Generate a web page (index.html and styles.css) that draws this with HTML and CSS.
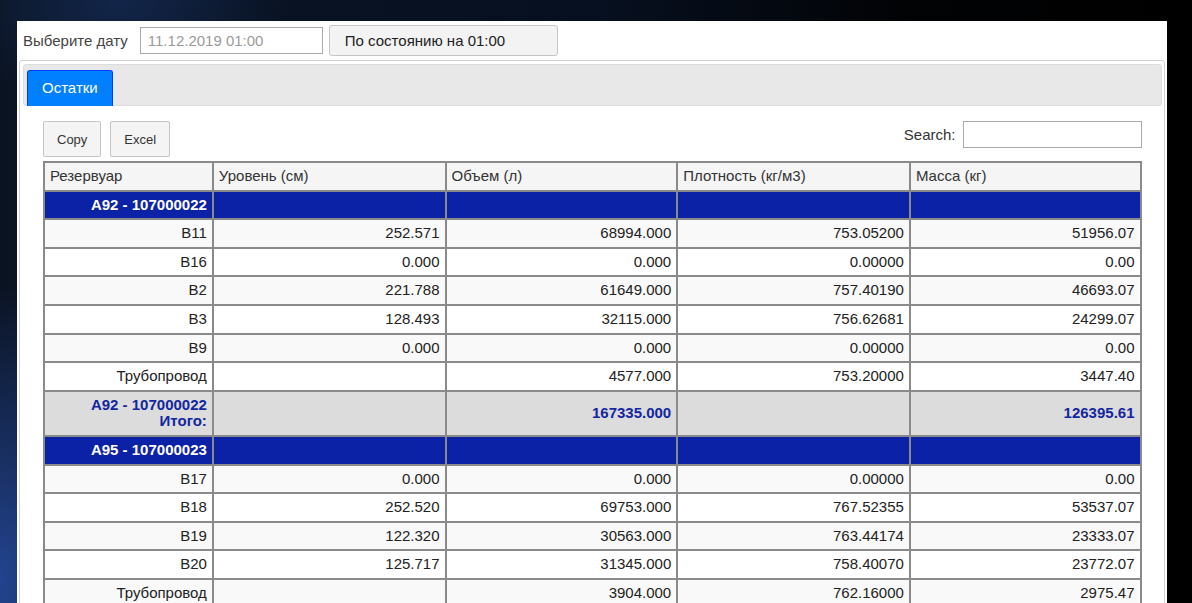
FILE: index.html
```html
<!DOCTYPE html>
<html lang="ru">
<head>
<meta charset="utf-8">
<title>Остатки</title>
<link rel="stylesheet" href="styles.css">
</head>
<body>
<div class="panel">
  <div class="toolbar">
    <span class="toolbar-label">Выберите дату</span>
    <input class="date-input" type="text" placeholder="11.12.2019 01:00">
    <button class="state-btn">По состоянию на 01:00</button>
  </div>
  <div class="tabs">
    <ul class="tabs-nav">
      <li class="tab active">Остатки</li>
    </ul>
    <div class="tab-panel">
      <div class="dt-controls">
        <div class="dt-buttons">
          <button class="dt-button">Copy</button>
          <button class="dt-button">Excel</button>
        </div>
        <label class="dt-search">Search: <input type="search" class="search-input"></label>
      </div>
      <table class="grid">
        <colgroup>
          <col class="c1"><col class="c2"><col class="c3"><col class="c2"><col class="c4">
        </colgroup>
        <thead>
          <tr><th>Резервуар</th><th>Уровень (см)</th><th>Объем (л)</th><th>Плотность (кг/м3)</th><th>Масса (кг)</th></tr>
        </thead>
        <tbody>
          <tr class="group"><td>A92 - 107000022</td><td></td><td></td><td></td><td></td></tr>
          <tr class="odd"><td>B11</td><td>252.571</td><td>68994.000</td><td>753.05200</td><td>51956.07</td></tr>
          <tr class="even"><td>B16</td><td>0.000</td><td>0.000</td><td>0.00000</td><td>0.00</td></tr>
          <tr class="odd"><td>B2</td><td>221.788</td><td>61649.000</td><td>757.40190</td><td>46693.07</td></tr>
          <tr class="even"><td>B3</td><td>128.493</td><td>32115.000</td><td>756.62681</td><td>24299.07</td></tr>
          <tr class="odd"><td>B9</td><td>0.000</td><td>0.000</td><td>0.00000</td><td>0.00</td></tr>
          <tr class="even"><td>Трубопровод</td><td></td><td>4577.000</td><td>753.20000</td><td>3447.40</td></tr>
          <tr class="total"><td>A92 - 107000022<br>Итого:</td><td></td><td>167335.000</td><td></td><td>126395.61</td></tr>
          <tr class="group"><td>A95 - 107000023</td><td></td><td></td><td></td><td></td></tr>
          <tr class="odd"><td>B17</td><td>0.000</td><td>0.000</td><td>0.00000</td><td>0.00</td></tr>
          <tr class="even"><td>B18</td><td>252.520</td><td>69753.000</td><td>767.52355</td><td>53537.07</td></tr>
          <tr class="odd"><td>B19</td><td>122.320</td><td>30563.000</td><td>763.44174</td><td>23333.07</td></tr>
          <tr class="even"><td>B20</td><td>125.717</td><td>31345.000</td><td>758.40070</td><td>23772.07</td></tr>
          <tr class="odd"><td>Трубопровод</td><td></td><td>3904.000</td><td>762.16000</td><td>2975.47</td></tr>
        </tbody>
      </table>
    </div>
  </div>
</div>
</body>
</html>
```

FILE: styles.css
```css
html, body {
  margin: 0;
  padding: 0;
  height: 100%;
  overflow: hidden;
}
body {
  font-family: "Liberation Sans", Arial, sans-serif;
  font-size: 15px;
  color: #222;
  background:
    radial-gradient(ellipse 240px 160px at 120px 0px, rgba(30, 60, 120, 0.45), rgba(20, 40, 90, 0) 70%),
    radial-gradient(ellipse 260px 420px at 0px 580px, rgba(40, 80, 170, 0.8), rgba(20, 40, 90, 0) 70%),
    linear-gradient(90deg, #0b1322 0px, #0a1424 17px, #071020 600px, #020305 900px, #000 1192px);
}
.panel {
  margin: 21px 0 0 17px;
  width: 1150px;
  height: 600px;
  background: #fff;
}
.toolbar {
  display: flex;
  align-items: center;
  padding: 4px 6px 4px 6px;
}
.toolbar-label {
  color: #444;
  font-size: 15px;
  margin-right: 12px;
}
.date-input {
  box-sizing: border-box;
  width: 183px;
  height: 27px;
  border: 1px solid #aaa;
  padding: 0 7px;
  font: inherit;
  font-size: 15px;
  color: #999;
  margin: 0;
}
.date-input::placeholder { color: #9a9a9a; }
.state-btn {
  box-sizing: border-box;
  margin-left: 6px;
  width: 229px;
  height: 31px;
  padding: 0 15px;
  text-align: left;
  font: inherit;
  font-size: 15px;
  color: #222;
  background: #f3f3f3;
  border: 1px solid #c5c5c5;
  border-radius: 3px;
}
.tabs {
  margin: 0 2px 0 2px;
  border: 1px solid #d0d0d0;
  border-radius: 3px;
  padding: 2.5px;
}
.tabs-nav {
  list-style: none;
  margin: 0;
  padding: 5px 3px 0;
  display: flex;
  background: #e8e8e8;
  border: 1px solid #dddddd;
  border-radius: 3px;
}
.tab {
  padding: 8px 14.5px 10.5px;
  margin-bottom: -1px;
  background: #007fff;
  border: 1px solid #003eff;
  border-bottom: 0;
  border-radius: 3px 3px 0 0;
  color: #fff;
}
.tab-panel {
  padding: 15px 20px 0 20.5px;
}
.dt-controls {
  display: flex;
  justify-content: space-between;
  align-items: flex-start;
}
.dt-buttons {
  display: flex;
  gap: 9px;
}
.dt-button {
  box-sizing: border-box;
  height: 36px;
  padding: 0 13px;
  font: inherit;
  font-size: 13px;
  color: #333;
  background: #f4f4f4;
  border: 1px solid #c4c4c4;
  border-radius: 2px;
}
.dt-search {
  display: flex;
  align-items: center;
  color: #333;
  font-size: 15px;
}
.search-input {
  box-sizing: border-box;
  width: 179px;
  height: 27px;
  margin-left: 7px;
  border: 1px solid #aaa;
  font: inherit;
}
.grid {
  width: 100%;
  margin-top: 4px;
  border-collapse: separate;
  border-spacing: 0;
  border: 1px solid #8a8a8a;
  table-layout: fixed;
}
.grid col.c1 { width: 15.4%; }
.grid col.c2 { width: 21.22%; }
.grid col.c3 { width: 21.13%; }
.grid col.c4 { width: 21.03%; }
.grid th, .grid td {
  border: 1px solid #8a8a8a;
  padding: 5px 5px;
  line-height: 16.6px;
  overflow: hidden;
  white-space: nowrap;
}
.grid th {
  text-align: left;
  font-weight: normal;
  background: #f5f5f5;
  color: #333;
}
.grid td { text-align: right; }
.grid tr.odd td { background: #f9f9f9; }
.grid tr.even td { background: #fff; }
.grid tr.group td {
  background: #0c22a6;
  color: #fff;
  font-weight: bold;
}
.grid tr.total td {
  background: #dcdcdc;
  color: #1326a0;
  font-weight: bold;
}
```
